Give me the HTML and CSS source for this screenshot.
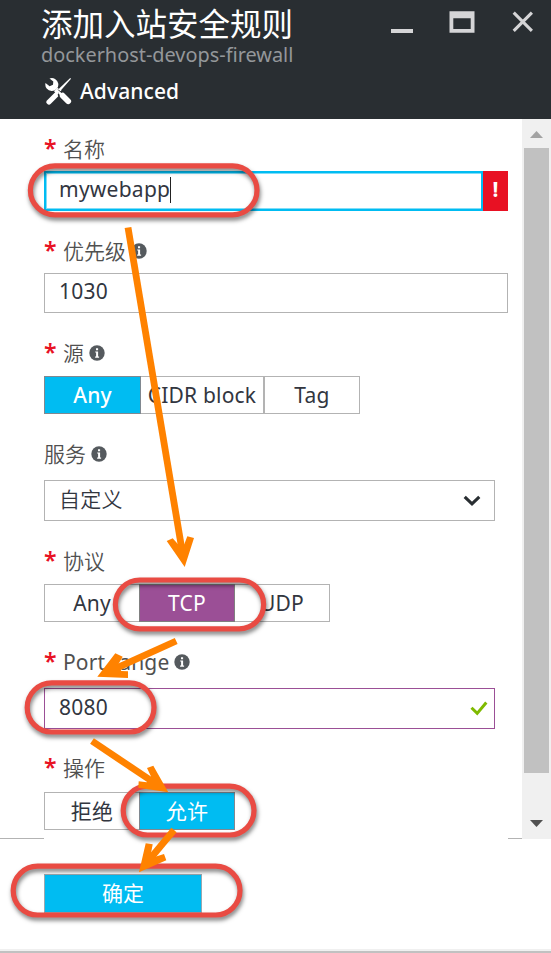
FILE: index.html
```html
<!DOCTYPE html>
<html lang="zh-CN">
<head>
<meta charset="utf-8">
<title>添加入站安全规则</title>
<link rel="stylesheet" href="styles.css">
</head>
<body>
<div class="blade">
  <header class="header">
    <div class="heading">
      <h1 class="title">添加入站安全规则</h1>
      <div class="subtitle">dockerhost-devops-firewall</div>
      <div class="command">
        <svg class="tools" width="28" height="28" viewBox="0 0 28 28">
          <path d="M5 25 L15 15" stroke="#fff" stroke-width="5.2" stroke-linecap="round"/>
          <path d="M11.8 12.5 L14.4 15.1" stroke="#fff" stroke-width="5"/>
          <path d="M5.5 1.5 A6.5 6.5 0 1 1 1.5 6.1 L5.6 9.2 L9 7.8 L9.3 4.5 Z" fill="#fff"/>
          <path d="M26.2 1 L27 1.8 L14.6 16 L12.6 14 Z" fill="#fff"/>
          <path d="M14.2 12.6 L16.4 14.8" stroke="#292e32" stroke-width="1"/>
          <path d="M17.8 17.8 L24.2 24.2" stroke="#292e32" stroke-width="7.6" stroke-linecap="round"/>
          <path d="M18.7 18.7 L24.2 24.2" stroke="#fff" stroke-width="5.8" stroke-linecap="round"/>
          <path d="M14.8 15.2 L18.4 18.8" stroke="#fff" stroke-width="2.4"/>
        </svg>
        <span class="command-text">Advanced</span>
      </div>
    </div>
    <div class="controls">
      <svg width="22" height="24" viewBox="0 0 22 24"><path d="M0 20h22v4H0z" fill="#d5d5d7"/></svg>
      <svg width="26" height="24" viewBox="0 0 26 24"><path fill-rule="evenodd" d="M.5 2.2h25v21.6H.5zM4.3 9.2v10.8h17.4V9.2z" fill="#d5d5d7"/></svg>
      <svg width="22" height="24" viewBox="0 0 22 24"><path d="M1.7 3.7l18.2 18.2M19.9 3.7L1.7 21.9" stroke="#d5d5d7" stroke-width="3.1"/></svg>
    </div>
  </header>

  <div class="body">
    <main class="form">
      <section class="field">
        <div class="label"><span class="star">*</span><span class="han">名称</span></div>
        <div class="input input-active"><span class="value name-value">mywebapp</span><span class="caret"></span><span class="error">!</span></div>
      </section>
      <section class="field">
        <div class="label"><span class="star">*</span><span class="han">优先级</span><svg class="info" viewBox="0 0 16 16"><circle cx="8" cy="8" r="7.7"/><path d="M6.2 6.4h2.9v5.1h1v1.2H6.1v-1.2h1V7.6h-.9zM7 3.3h2.1v2H7z"/></svg></div>
        <div class="input number"><span class="value">1030</span></div>
      </section>
      <section class="field">
        <div class="label"><span class="star">*</span><span class="han">源</span><svg class="info" viewBox="0 0 16 16"><circle cx="8" cy="8" r="7.7"/><path d="M6.2 6.4h2.9v5.1h1v1.2H6.1v-1.2h1V7.6h-.9zM7 3.3h2.1v2H7z"/></svg></div>
        <div class="options options-source"><span class="option on medium">Any</span><span class="option wide">CIDR block</span><span class="option split">Tag</span></div>
      </section>
      <section class="field field-tall">
        <div class="label"><span class="han">服务</span><svg class="info" viewBox="0 0 16 16"><circle cx="8" cy="8" r="7.7"/><path d="M6.2 6.4h2.9v5.1h1v1.2H6.1v-1.2h1V7.6h-.9zM7 3.3h2.1v2H7z"/></svg></div>
        <div class="input short"><span class="value han">自定义</span><svg class="mark" width="18" height="12" viewBox="0 0 18 12"><path d="M1.7 1.8L9 8.9l7.3-7.1" fill="none" stroke="#292e32" stroke-width="3.1"/></svg></div>
      </section>
      <section class="field">
        <div class="label"><span class="star">*</span><span class="han">协议</span></div>
        <div class="options"><span class="option">Any</span><span class="option chosen">TCP</span><span class="option last">UDP</span></div>
      </section>
      <section class="field field-tall">
        <div class="label"><span class="star">*</span><span class="latin-label">Port range</span><svg class="info" viewBox="0 0 16 16"><circle cx="8" cy="8" r="7.7"/><path d="M6.2 6.4h2.9v5.1h1v1.2H6.1v-1.2h1V7.6h-.9zM7 3.3h2.1v2H7z"/></svg></div>
        <div class="input short edited"><span class="value">8080</span><svg class="check" width="18" height="15" viewBox="0 0 18 15"><path d="M1.5 6.8l5.7 5.6L16.3 1.5" fill="none" stroke="#7fba00" stroke-width="3"/></svg></div>
      </section>
      <section class="field field-last">
        <div class="label"><span class="star">*</span><span class="han">操作</span></div>
        <div class="options"><span class="option">拒绝</span><span class="option on">允许</span></div>
      </section>
    </main>
    <div class="scrollbar">
      <svg class="arrow" width="13" height="7" viewBox="0 0 13 7"><path d="M0 7h13L6.5 0z" fill="#a3a3a3"/></svg>
      <div class="thumb"></div>
      <svg class="arrow" width="13" height="7" viewBox="0 0 13 7"><path d="M0 0h13L6.5 7z" fill="#505050"/></svg>
    </div>
  </div>

  <footer class="footer">
    <div class="rule"><span class="rule-left"></span><span class="rule-right"></span></div>
    <div class="submit">确定</div>
    <div class="track"></div>
  </footer>

  <svg class="notes" width="551" height="953" viewBox="0 0 551 953">
    <g class="rings">
      <rect x="30.4" y="165.8" width="226.6" height="49" rx="24.5"/>
      <rect x="115.4" y="580" width="148.2" height="48.8" rx="24.4"/>
      <rect x="27.2" y="682.8" width="126.8" height="49.2" rx="24.6"/>
      <rect x="123.2" y="786.2" width="130.8" height="48.8" rx="24.4"/>
      <rect x="13.2" y="866.2" width="226.8" height="48.8" rx="24.4"/>
    </g>
    <g class="shafts">
      <path d="M128 227.5L182.8 555"/>
      <path d="M176.2 641L108 671.8"/>
      <path d="M92 741L158 785.3"/>
      <path d="M174 830L147 862.5"/>
    </g>
    <g class="heads">
      <path d="M166.7 541L172.7 538.3L178.9 545.3L184.3 544.3L187.3 536.3L194 538L184.7 567Z"/>
      <path d="M115.3 653.3L122.7 656.7L118.3 664.3L121.3 671L128 671.3V678L97.3 676.7Z"/>
      <path d="M147 768L153.3 765.7L168.3 792.3L138.3 787.7L138.7 781.3L146.7 782.3L151 776.5Z"/>
      <path d="M145.7 843.3L152.7 844.3L151 853.3L154.5 857L164 854L166.3 860.3L139 872.3Z"/>
    </g>
  </svg>
</div>
</body>
</html>
```

FILE: styles.css
```css
* { box-sizing: border-box; }

body {
  margin: 0;
  background: #fff;
  color: #32363f;
  font: 21px/30px "Noto Sans", "Noto Sans CJK SC", sans-serif;
}

.blade {
  position: relative;
  width: 551px;
  height: 953px;
  overflow: hidden;
  display: flex;
  flex-direction: column;
}

.header {
  height: 119px;
  flex: none;
  display: flex;
  justify-content: space-between;
  background: #292e32;
  color: #fff;
}

.heading { padding-left: 41px; white-space: nowrap; }

.title {
  margin: 0;
  padding-top: 4px;
  height: 41px;
  font: 400 31.5px/36px "Noto Sans CJK SC", sans-serif;
}

.subtitle { color: #94979a; line-height: 28px; font-size: 19.9px; }

.command { display: flex; align-items: center; gap: 8px; margin-top: 7px; height: 30px; padding-left: 3px; }
.tools { flex: none; fill: none; }
.command-text { font-weight: 500; letter-spacing: .1px; }

.controls { display: flex; gap: 37px; padding: 9px 17px 0 0; }
.controls svg:first-child { margin-right: -1px; }

.body { display: flex; height: 719px; flex: none; }

.form { width: 522px; padding: 15px 14px 0 44px; }

.field { display: flex; flex-direction: column; gap: 7px; margin-bottom: 25px; }
.field:nth-child(3), .field:nth-child(5) { gap: 8px; }
.field-tall { gap: 11px; }
.field-last { gap: 9px; }
.field:nth-child(6) { margin-bottom: 24px; }

.label { display: flex; align-items: center; height: 30px; color: #505050; white-space: nowrap; }
.star { width: 19px; color: #e81123; font-weight: 600; font-size: 23px; padding-bottom: 3px; }
.han { font-family: "Noto Sans CJK SC", sans-serif; font-weight: 350; padding-bottom: 2px; }
.latin-label { letter-spacing: .15px; }
.info { width: 16px; height: 16px; margin: 0 0 1px 5px; }
.info circle { fill: #555a5e; }
.info path { fill: #fff; }

.input {
  display: flex;
  align-items: center;
  height: 40px;
  border: 1px solid #b3b3b3;
  padding: 0 0 3px 14px;
}
.value { letter-spacing: .25px; }
.number { padding-bottom: 5px; }
.short { width: 451px; height: 41px; }
.edited { border-color: #9b4f96; }

.input-active {
  border: 0;
  padding: 0 0 0 15px;
  box-shadow: inset 0 0 0 2px #00bcf2, inset 0 0 0 3px #7fddf8;
  width: 464px;
}
.input-active .value { padding-bottom: 4px; }
.caret { width: 1px; height: 26px; margin-bottom: 2px; background: #222; }
.error {
  align-self: stretch;
  width: 25px;
  margin-left: auto;
  background: #e81123;
  box-shadow: -2px 0 #00bcf2;
  color: #fff;
  font-weight: 700;
  line-height: 37px;
  text-align: center;
}

.mark { margin: 3px 13px 0 auto; }
.check { margin: 3px 6px 0 auto; }

.options { display: flex; height: 38px; }
.option {
  width: 96px;
  border: 1px solid #b3b3b3;
  border-left-width: 0;
  line-height: 36px;
  text-align: center;
  white-space: nowrap;
  letter-spacing: .2px;
}
.option:first-child { width: 95px; border-left-width: 1px; border-right-width: 0; }
.option.on { background: #00bcf2; color: #fff; border: 1px solid #808890; }
.option.chosen { background: #9b4f96; color: #fff; border: 1px solid #808080; }
.option.medium { font-weight: 500; }
.options-source .option:first-child { width: 97px; border-right-width: 1px; }
.option.wide { width: 123px; }
.option.split { border-left-width: 1px; }
.option.last { width: 95px; }

.scrollbar {
  width: 29px;
  height: 720px;
  padding: 12px 2px;
  background: #f0f0f0;
  display: flex;
  flex-direction: column;
  align-items: center;
}
.thumb { flex: none; width: 25px; height: 625px; margin: 10px 0 47px; background: #c1c1c1; }
.arrow { flex: none; }

.footer { flex: 1; display: flex; flex-direction: column; }
.rule { display: flex; justify-content: space-between; width: 522px; height: 1px; }
.rule-left { width: 44px; background: #b3b3b3; }
.rule-right { width: 14px; background: #b3b3b3; }
.submit {
  width: 158px;
  height: 39px;
  margin: 35px 0 0 44px;
  border: 1px solid #9aa8b0;
  background: #00bcf2;
  color: #fff;
  line-height: 37px;
  text-align: center;
}
.track { height: 4px; margin-top: auto; background: #c1c1c1; border-top: 2px solid #f0f0f0; }

.notes { position: absolute; left: 0; top: 0; }
.rings { fill: none; stroke: #e94b43; stroke-width: 5.2; filter: drop-shadow(1px 3px 2px rgba(0, 0, 0, .5)); }
.shafts { fill: none; stroke: #ff8200; stroke-width: 6.8; }
.heads { fill: #ff8200; }
```
